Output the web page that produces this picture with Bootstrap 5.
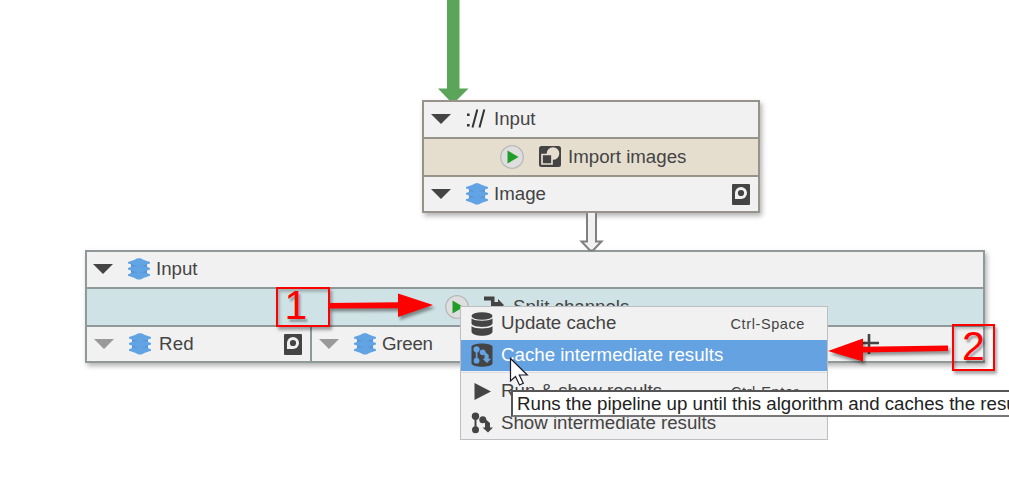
<!DOCTYPE html>
<html lang="en">
<head>
<meta charset="utf-8">
<meta name="viewport" content="width=device-width, initial-scale=1">
<title>Pipeline graph</title>
<link href="https://cdn.jsdelivr.net/npm/bootstrap@5.3.0/dist/css/bootstrap.min.css" rel="stylesheet">
<style>
  body { font-family: "Liberation Sans", Arial, sans-serif; font-size: 18.7px; line-height: 1; color: #444; background: #fff; }
  svg { display: block; flex: none; overflow: visible; }
  .canvas { width: 1009px; height: 491px; }
  .node { background: #f1f1f1; border: 2px solid; box-shadow: 2px 3px 5px rgba(0,0,0,.3); height: 113px; }
  .node-import { left: 422px; top: 100px; width: 338px; border-color: #98938a; }
  .node-split { left: 85px; top: 250px; width: 900px; border-color: #8f9999; }
  .slot-row { height: 35px; }
  .algo-row { height: 40px; border: solid; border-width: 2px 0; border-color: inherit; }
  .node-import .algo-row { background: #e5decf; }
  .node-split .algo-row { background: #cfe2e5; }
  .slot-row, .algo-row { white-space: nowrap; }
  .node svg { position: relative; top: -.5px; }
  .arrow-tri { width: 20px; height: 10px; margin-left: 7px; }
  .slot-icon { width: 24px; height: 22px; margin: 0 5px 0 14px; }
  .cache-icon { width: 18px; height: 21px; }
  .split-port { border-right: 2px solid #8f9999; width: 225px; }
  .overlay { left: 0; top: 0; }
  .ctx { left: 460px; top: 306px; width: 368px; height: 134px; background: #f1f1f1; border: 1.5px solid #bebec2; padding-top: 1px; }
  .ctx-row { height: 31.5px; padding-left: 9px; white-space: nowrap; }
  .ctx-row svg { margin-right: 7px; }
  .ctx-active { background: #65a2e2; color: #fff; }
  .ctx-line { height: 4px; border-top: 1px solid #dedee2; margin-top: 1px; }
  .shortcut { font-size: 14.5px; letter-spacing: .6px; margin-right: 22px; }
  .tip { left: 511px; top: 390px; width: 520px; height: 27px; background: #fff; border: 2px solid #555; border-bottom-color: #777; color: #222; padding: 2px 0 0 4px; white-space: nowrap; }
  .callout { border: 2px solid #f00; color: #f00; font-size: 41px; box-shadow: 2px 3px 3px rgba(0,0,0,.35), inset 2px 3px 3px rgba(0,0,0,.22); text-shadow: 2px 3px 2px rgba(0,0,0,.3); }
  .callout-one { left: 276px; top: 287px; width: 54px; height: 40px; padding: 0 14px 3px 0; }
  .callout-two { left: 952px; top: 324px; width: 43px; height: 47px; padding-bottom: 3px; }
</style>
</head>
<body>
<svg width="0" height="0" class="position-absolute">
  <defs>
    <symbol id="stack" viewBox="0 0 24 22">
      <path fill="#5594da" d="M4 4h16v14H4z"/>
      <path fill="#62a3e4" d="M1 16.300l4-1.500h14l4 1.500v1.500l-6 1.900-3.500 1.700h-3L7 19.700l-6-1.900zM1 10.100l4-1.500h14l4 1.500v1.500l-6 1.900-3.500 1.300h-3L7 13.500l-6-1.900zM1 3.900L7 2 10.500.3h3L17 2l6 1.900v1.500l-6 1.900-3.500 1.300h-3L7 7.300 1 5.400z"/>
    </symbol>
    <symbol id="tri" viewBox="0 0 20 10"><path fill="currentColor" d="M0 0h20L10 10z"/></symbol>
    <symbol id="cache" viewBox="0 0 18 21">
      <rect width="18" height="21" rx="1" fill="#444"/>
      <path fill="#f1f1f1" d="M3 15V9a6 6 0 1 1 6 6z"/><circle cx="9" cy="9" r="3.100" fill="#444"/>
    </symbol>
    <symbol id="play" viewBox="0 0 24 24">
      <circle cx="12" cy="12" r="11.300" fill="#dedede" stroke="#b9b9b9" stroke-width="1.300"/>
      <path fill="#1f9d27" d="M7.500 5.500L18.500 12l-11 6.500z"/>
    </symbol>
    <symbol id="flow" viewBox="0 0 24 24">
      <g fill="currentColor" stroke="none"><circle cx="5.500" cy="5.200" r="3.700"/><circle cx="5.500" cy="18.800" r="3.500"/><circle cx="12.800" cy="8.800" r="3.500"/><path d="M13 6l7 6v4.500h3L18 21.500 12.500 16.500H15V12.500z"/></g>
      <path d="M5.500 6v12" stroke="currentColor" stroke-width="2"/>
    </symbol>
  </defs>
</svg>

<main class="canvas position-relative overflow-hidden">
  <!-- graph nodes -->
  <section class="node node-import position-absolute">
    <div class="slot-row d-flex align-items-center">
      <svg class="arrow-tri"><use href="#tri"/></svg>
      <svg class="slot-icon" viewBox="0 0 24 22"><path d="M2 5.500h2.600v2.600H2zM2 16h2.600v2.600H2z" fill="#333"/><path d="M7.500 19.500L12.300 1.500M14.500 19.500L19.300 1.500" stroke="#333" stroke-width="2"/></svg>
      <span>Input</span>
    </div>
    <div class="algo-row d-flex align-items-center">
      <svg width="24" height="24" style="margin-left:76px"><use href="#play"/></svg>
      <svg width="22" height="21" viewBox="0 0 22 21" style="margin:0 7px 0 15px">
        <rect width="22" height="21" rx="2.500" fill="#444"/>
        <circle cx="14" cy="7.500" r="6.300" fill="#e5decf"/>
        <path d="M3 8.500h10v9.500H3z" fill="#444" stroke="#e5decf" stroke-width="1.700"/>
      </svg>
      <span>Import images</span>
    </div>
    <div class="slot-row d-flex align-items-center">
      <svg class="arrow-tri"><use href="#tri"/></svg>
      <svg class="slot-icon"><use href="#stack"/></svg>
      <span>Image</span>
      <svg class="cache-icon ms-auto me-2"><use href="#cache"/></svg>
    </div>
  </section>

  <section class="node node-split position-absolute">
    <div class="slot-row d-flex align-items-center">
      <svg class="arrow-tri" style="margin-left:6px"><use href="#tri"/></svg>
      <svg class="slot-icon"><use href="#stack"/></svg>
      <span>Input</span>
    </div>
    <div class="algo-row d-flex align-items-center">
      <svg width="24" height="24" style="margin-left:358px"><use href="#play"/></svg>
      <svg width="22" height="22" viewBox="0 0 22 22" style="margin:0 7px 0 14px"><path fill="#444" d="M1 .5h10.500V6H15V3l6 6-6 5v-4H8V4.500H1z"/></svg>
      <span style="margin-left:1px">Split channels</span>
    </div>
    <div class="slot-row d-flex">
      <div class="split-port d-flex align-items-center">
        <svg class="arrow-tri" style="color:#999"><use href="#tri"/></svg>
        <svg class="slot-icon"><use href="#stack"/></svg>
        <span class="ms-1" style="letter-spacing:.2px;padding-right:1px;text-indent:-2px">Red</span>
        <svg class="cache-icon ms-auto me-2"><use href="#cache"/></svg>
      </div>
      <div class="d-flex align-items-center flex-grow-1">
        <svg class="arrow-tri" style="color:#999"><use href="#tri"/></svg>
        <svg class="slot-icon"><use href="#stack"/></svg>
        <span style="letter-spacing:-.25px">Green</span>
        <svg width="20" height="20" class="ms-auto" style="margin-right:104px"><path d="M10 0v20M0 9h20" stroke="#444" stroke-width="2.600"/></svg>
      </div>
    </div>
  </section>

  <!-- connections between nodes -->
  <svg class="overlay position-absolute" width="1009" height="491">
    <path fill="#5ba55b" d="M447 0h12.500v88.500h9L457 100h-8l-11-11.500h9z"/>
    <path fill="#f1f1f1" stroke="#808080" stroke-width="2" d="M587 213v28.500h-5.500l8.500 9h3l8.500-9H596V213"/>
    <path stroke="#98938a" stroke-width="2" d="M436 101h34M584 212h16"/>
  </svg>

  <!-- context menu -->
  <div class="ctx position-absolute">
    <div class="ctx-row d-flex align-items-center">
      <svg width="24" height="24" viewBox="0 0 24 24" fill="#444">
        <ellipse cx="12" cy="4" rx="10.500" ry="3.800"/>
        <path d="M1.500 6.500c4 3 17 3 21 0v5c-1 4.500-20 4.500-21 0zM1.500 14.200c4 3 17 3 21 0v5.500c-1 5.500-20 5.500-21 0z"/>
      </svg>
      <span>Update cache</span><span class="shortcut ms-auto">Ctrl-Space</span>
    </div>
    <div class="ctx-row ctx-active d-flex align-items-center">
      <svg width="24" height="24" viewBox="0 0 24 24">
        <path fill="#444" d="M1.500 3.500C3-.6 21-.6 22.500 3.500v17c-1.500 4.300-19.500 4.300-21 0z"/>
        <use href="#flow" x="2" y="2" width="20" height="20" color="#65a2e2"/>
      </svg>
      <span>Cache intermediate results</span>
    </div>
    <div class="ctx-line"></div>
    <div class="ctx-row d-flex align-items-center">
      <svg width="24" height="24" viewBox="0 0 24 24"><path fill="#444" d="M4.500 3L21 11.500 4.500 20z"/></svg>
      <span>Run &amp; show results</span><span class="shortcut ms-auto" style="margin-right:28px">Ctrl-Enter</span>
    </div>
    <div class="ctx-row d-flex align-items-center">
      <svg width="24" height="24"><use href="#flow"/></svg>
      <span>Show intermediate results</span>
    </div>
  </div>

  <div class="tip position-absolute d-flex align-items-center"><span>Runs the pipeline up until this algorithm and caches the results</span></div>

  <!-- numbered callouts, their arrows and the mouse pointer -->
  <div class="callout callout-one position-absolute d-flex align-items-center justify-content-center">1</div>
  <div class="callout callout-two position-absolute d-flex align-items-center justify-content-center">2</div>
  <svg class="overlay position-absolute" width="1009" height="491">
    <g fill="#f00" style="filter:drop-shadow(2px 3px 1.500px rgba(0,0,0,.4))">
      <path d="M329 303l69-.8V293.500l35 11.500-35 12v-8.800l-69 .3z"/>
      <path d="M828 351l35-12.500v8.300l85-1.300v5.500l-85 1.500v9z"/>
    </g>
    <path fill="#fff" stroke="#1a1a2a" stroke-width="1.200" d="M510.500 358.500v22.500l5-4.500 4 8.500 3.800-1.800-4-8.200h8z"/>
  </svg>
</main>
<script src="https://cdn.jsdelivr.net/npm/bootstrap@5.3.0/dist/js/bootstrap.bundle.min.js"></script>
</body>
</html>
